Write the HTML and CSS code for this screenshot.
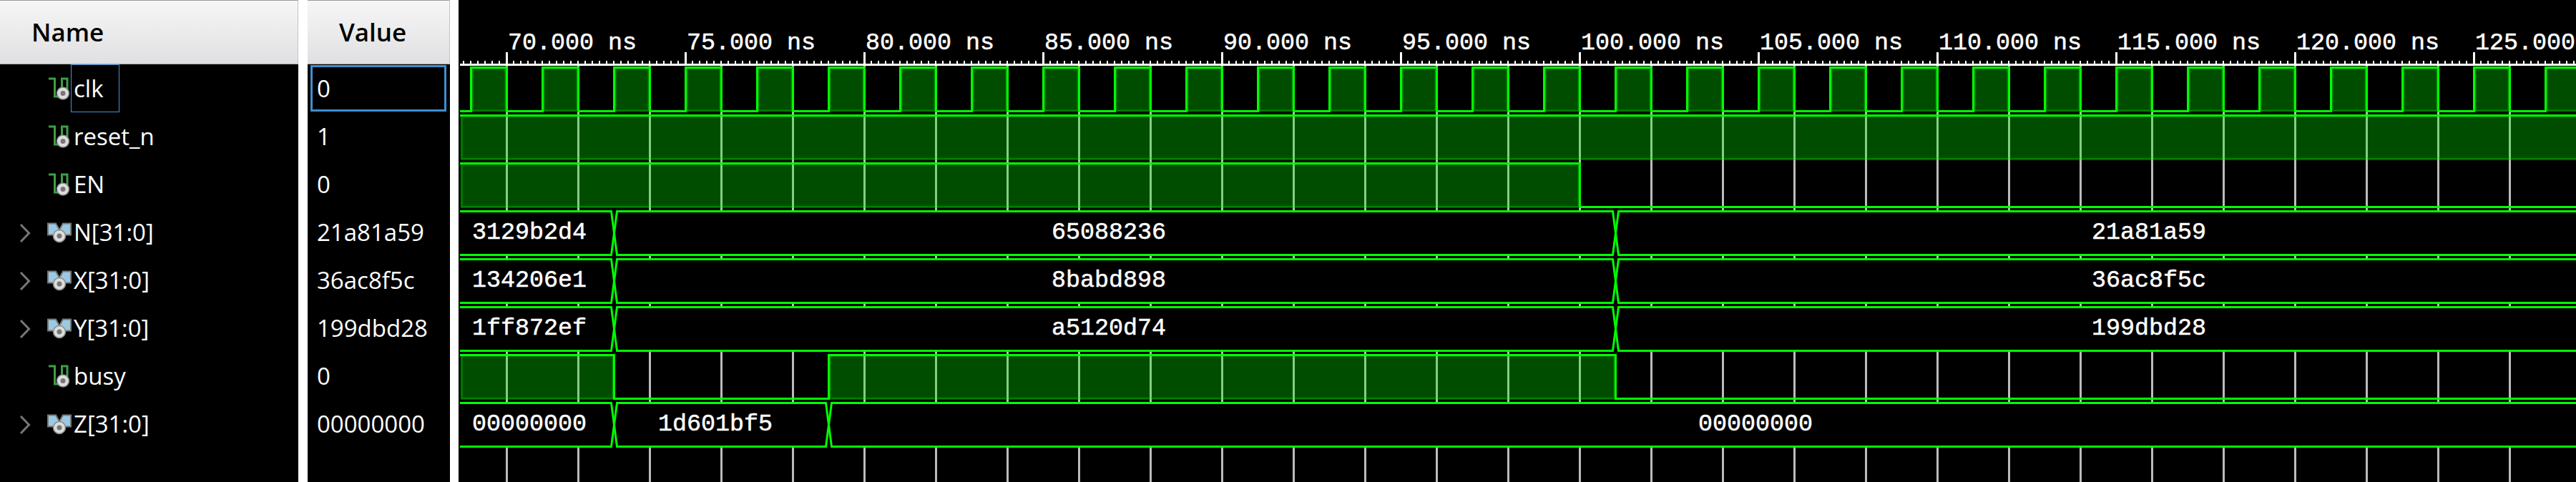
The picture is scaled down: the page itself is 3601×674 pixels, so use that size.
FILE: index.html
```html
<!DOCTYPE html>
<html lang="en">
<head>
  <meta charset="UTF-8" />
  <title>Waveform</title>
  <link rel="stylesheet" href="styles.css">
</head>
<body>
  <svg class="icon-defs" width="0" height="0">
    <defs>
      <symbol id="chevron" viewBox="0 0 16 28">
        <path class="chevron-line" d="M2,2 L13.5,14 L2,26" />
      </symbol>
      <symbol id="wire" viewBox="0 0 34 34">
        <path class="wire-line" d="M2,3 H10.5 V28 H20.5 V3 H28 V18" />
        <circle class="knob" cx="22" cy="23.5" r="8.5" />
        <circle class="knob-dot" cx="22" cy="23.5" r="3.5" />
      </symbol>
      <symbol id="bus" viewBox="0 0 34 34">
        <path class="bus-shape" d="M1,4.5 H12 L17,13.5 L22,4.5 H33 V20.5 H1 Z" />
        <circle class="knob" cx="17" cy="22" r="8.5" />
        <circle class="knob-dot" cx="17" cy="22" r="3.5" />
      </symbol>
    </defs>
  </svg>

  <div class="name-col">
    <div class="col-head">Name</div>
    <div class="name-row">
      <span class="twist"></span>
      <svg class="sig-icon"><use href="#wire" /></svg>
      <span class="label selected">clk</span>
    </div>
    <div class="name-row">
      <span class="twist"></span>
      <svg class="sig-icon"><use href="#wire" /></svg>
      <span class="label">reset_n</span>
    </div>
    <div class="name-row">
      <span class="twist"></span>
      <svg class="sig-icon"><use href="#wire" /></svg>
      <span class="label">EN</span>
    </div>
    <div class="name-row">
      <svg class="twist"><use href="#chevron" /></svg>
      <svg class="sig-icon"><use href="#bus" /></svg>
      <span class="label">N[31:0]</span>
    </div>
    <div class="name-row">
      <svg class="twist"><use href="#chevron" /></svg>
      <svg class="sig-icon"><use href="#bus" /></svg>
      <span class="label">X[31:0]</span>
    </div>
    <div class="name-row">
      <svg class="twist"><use href="#chevron" /></svg>
      <svg class="sig-icon"><use href="#bus" /></svg>
      <span class="label">Y[31:0]</span>
    </div>
    <div class="name-row">
      <span class="twist"></span>
      <svg class="sig-icon"><use href="#wire" /></svg>
      <span class="label">busy</span>
    </div>
    <div class="name-row">
      <svg class="twist"><use href="#chevron" /></svg>
      <svg class="sig-icon"><use href="#bus" /></svg>
      <span class="label">Z[31:0]</span>
    </div>
  </div>

  <div class="value-col">
    <div class="col-head">Value</div>
    <div class="value-row selected">0</div>
    <div class="value-row">1</div>
    <div class="value-row">0</div>
    <div class="value-row">21a81a59</div>
    <div class="value-row">36ac8f5c</div>
    <div class="value-row">199dbd28</div>
    <div class="value-row">0</div>
    <div class="value-row">00000000</div>
  </div>

  <div class="wave-panel">
    <!-- viewBox uses page x so the numbers read as time: 50px = 1ns, 70ns at x=708 -->
    <svg class="wave" width="2960" height="674" viewBox="641 0 2960 674">
      <defs>
        <pattern id="grid-lines" x="618" y="0" width="100" height="10" patternUnits="userSpaceOnUse">
          <rect class="grid-line" x="89" y="0" width="3" height="10" />
        </pattern>
        <pattern id="ticks" x="647" y="85" width="10" height="5" patternUnits="userSpaceOnUse">
          <rect class="ruler-mark" x="0" y="0" width="2" height="5" />
        </pattern>
        <pattern id="clk-wave" x="618" y="90" width="100" height="70" patternUnits="userSpaceOnUse">
          <rect class="high-fill" x="42" y="5" width="47" height="60" />
          <path class="edge" d="M0,65.5 H40.5 V4.5 H90.5 V65.5 H100" />
        </pattern>
        <g id="bus-long">
          <rect class="bus-back" x="643" y="294" width="2958" height="64" />
          <path class="edge" d="M643,295.5 H854.5 L862.5,356.5 H2254.5 L2262.5,295.5 H3601" />
          <path class="edge" d="M643,356.5 H854.5 L862.5,295.5 H2254.5 L2262.5,356.5 H3601" />
        </g>
      </defs>

      <rect fill="url(#grid-lines)" x="700" y="90" width="2901" height="584" />

      <!-- ruler -->
      <rect fill="url(#ticks)" x="647" y="85" width="2954" height="5" />
      <rect class="ruler-mark" x="643" y="89" width="2958" height="3" />
      <g class="ruler-mark">
        <rect x="707" y="73" width="3" height="17" />
        <rect x="957" y="73" width="3" height="17" />
        <rect x="1207" y="73" width="3" height="17" />
        <rect x="1457" y="73" width="3" height="17" />
        <rect x="1707" y="73" width="3" height="17" />
        <rect x="1957" y="73" width="3" height="17" />
        <rect x="2207" y="73" width="3" height="17" />
        <rect x="2457" y="73" width="3" height="17" />
        <rect x="2707" y="73" width="3" height="17" />
        <rect x="2957" y="73" width="3" height="17" />
        <rect x="3207" y="73" width="3" height="17" />
        <rect x="3457" y="73" width="3" height="17" />
      </g>
      <g class="wave-text">
        <text x="710" y="69">70.000 ns</text>
        <text x="960" y="69">75.000 ns</text>
        <text x="1210" y="69">80.000 ns</text>
        <text x="1460" y="69">85.000 ns</text>
        <text x="1710" y="69">90.000 ns</text>
        <text x="1960" y="69">95.000 ns</text>
        <text x="2210" y="69">100.000 ns</text>
        <text x="2460" y="69">105.000 ns</text>
        <text x="2710" y="69">110.000 ns</text>
        <text x="2960" y="69">115.000 ns</text>
        <text x="3210" y="69">120.000 ns</text>
        <text x="3460" y="69">125.000 ns</text>
      </g>

      <!-- clk -->
      <rect fill="url(#clk-wave)" x="643" y="90" width="2958" height="70" />

      <!-- reset_n -->
      <rect class="high-fill" x="645" y="162" width="2980" height="60.5" />
      <path class="edge" d="M643,161.5 H3601" />

      <!-- EN -->
      <rect class="high-fill" x="645" y="229" width="1562" height="60.5" />
      <path class="edge" d="M643,228.5 H2208.5 V289.5 H3601" />

      <!-- N, X, Y -->
      <use href="#bus-long" />
      <use href="#bus-long" y="67" />
      <use href="#bus-long" y="134" />
      <g class="wave-text">
        <text x="660" y="333.5">3129b2d4</text>
        <text x="1470" y="333.5">65088236</text>
        <text x="2924" y="333.5">21a81a59</text>
        <text x="660" y="400.5">134206e1</text>
        <text x="1470" y="400.5">8babd898</text>
        <text x="2924" y="400.5">36ac8f5c</text>
        <text x="660" y="467.5">1ff872ef</text>
        <text x="1470" y="467.5">a5120d74</text>
        <text x="2924" y="467.5">199dbd28</text>
      </g>

      <!-- busy -->
      <rect class="high-fill" x="645" y="497" width="212" height="60.5" />
      <rect class="high-fill" x="1160" y="497" width="1097" height="60.5" />
      <path class="edge" d="M643,496.5 H858.5 V557.5 H1158.5 V496.5 H2258.5 V557.5 H3601" />

      <!-- Z -->
      <rect class="bus-back" x="643" y="562" width="2958" height="64" />
      <path class="edge" d="M643,563.5 H854.5 L862.5,624.5 H1154.5 L1162.5,563.5 H3601" />
      <path class="edge" d="M643,624.5 H854.5 L862.5,563.5 H1154.5 L1162.5,624.5 H3601" />
      <g class="wave-text">
        <text x="660" y="601.5">00000000</text>
        <text x="920" y="601.5">1d601bf5</text>
        <text x="2374" y="601.5">00000000</text>
      </g>
    </svg>
  </div>
</body>
</html>
```

FILE: styles.css
```css
html, body {
  margin: 0;
  padding: 0;
}

body {
  display: flex;
  width: 3601px;
  height: 674px;
  overflow: hidden;
  background: #fff;
  font-family: "Open Sans", sans-serif;
  font-size: 33px;
  color: #fff;
}

.icon-defs {
  position: absolute;
}

.name-col {
  width: 417px;
  margin-right: 13px;
  background: #000;
}

.value-col {
  display: flex;
  flex-direction: column;
  width: 199px;
  margin-right: 12px;
  background: #000;
}

.col-head {
  box-sizing: border-box;
  height: 90px;
  padding-left: 44px;
  line-height: 88px;
  font-size: 35px;
  font-weight: 600;
  color: #000;
  background: linear-gradient(#f6f6f6, #e0e0e2);
  border-top: 1px solid #9a9a9a;
  border-bottom: 1px solid #a8a8a8;
  border-right: 1px solid #c4c4c4;
}

.name-row {
  display: flex;
  align-items: center;
  height: 67px;
  padding-left: 27px;
}

.twist {
  width: 16px;
  height: 28px;
  margin-right: 23px;
  margin-top: 3px;
}

.sig-icon {
  width: 34px;
  height: 34px;
  flex: none;
}

.label {
  box-sizing: border-box;
  height: 67px;
  line-height: 66px;
  padding: 0 22px 0 3px;
  border: 1px solid transparent;
  margin-left: -1px;
}

.label.selected {
  border-color: #3f94d6;
}

.value-row {
  box-sizing: border-box;
  height: 65px;
  margin: 1px 5px 1px 4px;
  padding-left: 6px;
  line-height: 59px;
  border: 3px solid transparent;
}

.value-row.selected {
  border-color: #3f8fd0;
}

.chevron-line {
  fill: none;
  stroke: #777;
  stroke-width: 3;
}

.wire-line {
  fill: none;
  stroke: #3c9f46;
  stroke-width: 3;
}

.bus-shape {
  fill: #9bc8e2;
  stroke: #777;
  stroke-width: 2;
}

.knob {
  fill: #dcdcdc;
  stroke: #888;
  stroke-width: 1.5;
}

.knob-dot {
  fill: #777;
}

.wave-panel {
  flex: 1;
  background: #000;
}

.wave {
  display: block;
}

.wave-text {
  font-family: "Liberation Mono", monospace;
  font-size: 33.33px;
  fill: #fff;
  stroke: #fff;
  stroke-width: 0.5;
}

.grid-line {
  fill: #bbb;
}

.ruler-mark {
  fill: #fff;
}

.high-fill {
  fill: rgba(0, 255, 0, 0.3);
  stroke: rgba(0, 255, 0, 0.35);
  stroke-width: 3;
}

.edge {
  fill: none;
  stroke: #0f0;
  stroke-width: 3;
}

.bus-back {
  fill: #000;
}
```
